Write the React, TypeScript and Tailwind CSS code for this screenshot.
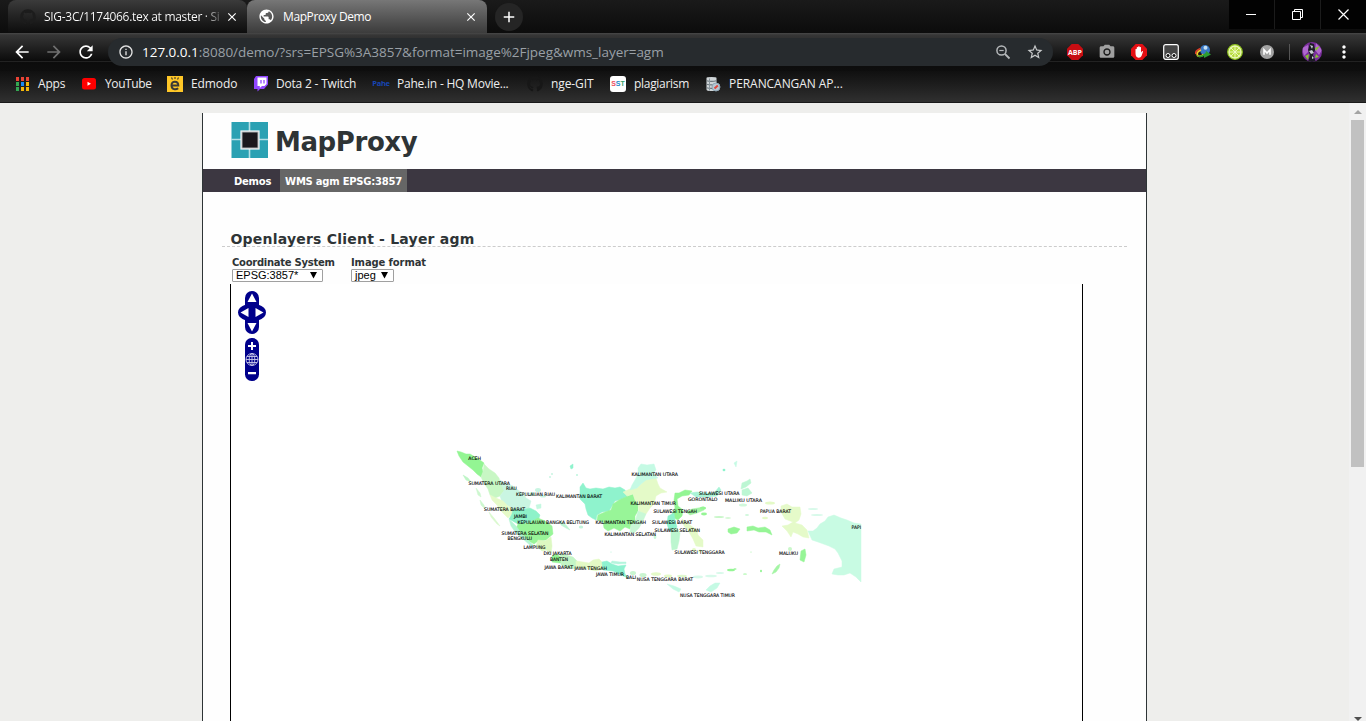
import React from "react";
import { FaGithub } from "react-icons/fa";
import { MdStarBorder, MdInfoOutline, MdArrowBack, MdArrowForward, MdRefresh, MdClose, MdAdd, MdPublic, MdCameraAlt, MdMoreVert } from "react-icons/md";

const ui = "font-['Open_Sans','Noto_Sans',sans-serif] whitespace-nowrap";
const verdana = "font-['DejaVu_Sans',sans-serif] whitespace-nowrap";

type Label = [string, number, number, number];

const labels: Label[] = [
  ["ACEH", 468.3, 481, 458.7],
  ["SUMATERA UTARA", 468.5, 510, 483],
  ["RIAU", 506, 516.7, 488.5],
  ["KEPULAUAN RIAU", 516, 555, 494.5],
  ["KALIMANTAN BARAT", 556, 602, 496],
  ["SUMATERA BARAT", 484, 525, 509.5],
  ["JAMBI", 514, 527, 516.5],
  ["KEPULAUAN BANGKA BELITUNG", 517.5, 589, 522.5],
  ["SUMATERA SELATAN", 501.5, 548.5, 533],
  ["BENGKULU", 507.5, 532, 538],
  ["LAMPUNG", 523.5, 545.5, 547.5],
  ["DKI JAKARTA", 543.5, 571.5, 553.5],
  ["BANTEN", 550, 568, 559.7],
  ["JAWA BARAT", 544.5, 573, 567.7],
  ["JAWA TENGAH", 574.5, 607, 568.5],
  ["JAWA TIMUR", 596, 624, 574.5],
  ["BALI", 626, 636, 577.5],
  ["NUSA TENGGARA BARAT", 636.8, 693, 579.3],
  ["NUSA TENGGARA TIMUR", 680, 735, 595.3],
  ["KALIMANTAN UTARA", 631.5, 678, 474.5],
  ["KALIMANTAN TIMUR", 630.5, 676, 503.3],
  ["SULAWESI TENGAH", 653.5, 697, 511.7],
  ["KALIMANTAN TENGAH", 595.5, 646, 521.8],
  ["SULAWESI BARAT", 652, 692, 521.8],
  ["SULAWESI SELATAN", 654.5, 700, 530.5],
  ["KALIMANTAN SELATAN", 604.5, 656, 534.7],
  ["SULAWESI TENGGARA", 674.5, 724.5, 552],
  ["GORONTALO", 688, 717.5, 499.3],
  ["SULAWESI UTARA", 699, 739.5, 493],
  ["MALUKU UTARA", 725, 762, 500],
  ["PAPUA BARAT", 760, 791, 511.7],
  ["MALUKU", 779, 798, 553.5],
  ["PAPI", 851.5, 861, 527.7],
];

const regions: [string, string][] = [
  ["#93f593", "457,451 461,452 466,454 470,454 475,457 480,460 484,463 482,468 483,472 481,477 477,474 473,470 468,466 463,462 459,456"],
  ["#c8f7c4", "484,464 489,469 495,473 499,478 500,482 504,485 504,491 500,496 495,498 490,495 488,489 484,483 481,477 483,472"],
  ["#c9f5e2", "500,480 506,484 513,486 518,490 524,494 526,498 531,501 529,508 521,510 513,509 507,505 502,502 500,496 504,491"],
  ["#e5fac8", "490,495 496,498 503,501 508,506 513,509 512,514 508,518 504,514 500,510 497,505 492,500"],
  ["#8ef2c9", "513,509 521,510 530,508 536,511 540,515 538,521 529,523 518,524 509,519 512,514"],
  ["#98f598", "518,524 529,523 538,518 545,521 552,526 553,534 546,540 538,541 534,544 527,540 521,535 516,529"],
  ["#b4f5d4", "509,519 516,526 522,534 528,540 534,546 531,546 523,539 516,533 511,526"],
  ["#ddf8c2", "538,540 545,541 551,537 552,546 551,553 546,550 542,551 536,546"],
  ["#93f593", "552,556 556,554 561,557 566,555 569,558 568,563 560,563 552,562"],
  ["#c3f5c6", "560,554 566,555 573,557 577,561 576,569 568,568 561,565"],
  ["#e3fac5", "576,561 583,562 589,563 593,560 599,559 603,563 603,569 596,571 583,568 576,568"],
  ["#8ef2d0", "602,562 607,561 612,564 618,566 626,565 624,569 625,574 628,578 621,575 613,571 603,570"],
  ["#b4f5dd", "612,561 620,562 626,562 626,563.500 618,564 611,563"],
  ["#8ff3cd", "580,487 583,483 586,488 590,489 596,488 603,489 609,487 615,488 620,487 625,490 628,496 622,499 615,501 612,506 609,511 602,512 597,515 596,520 592,518 588,515 586,509 585,504 580,499"],
  ["#98f598", "628,496 633,494 635,500 638,504 638,511 635,516 635,522 631,525 630,529 625,527 620,531 614,528 608,531 604,528 603,522 597,520 598,515 605,512 611,510 613,504 619,500"],
  ["#e4fac8", "623,492 630,489 637,488 641,484 645,480 651,478 656,478 658,484 660,488 667,492 661,493 656,496 654,504 650,508 646,514 641,515 639,511 638,504 635,500 633,494 627,496"],
  ["#c5fae4", "638,468 641,464 647,465 654,464 656,470 653,473 658,478 651,479 646,480 641,484 637,488 630,490 632,485 635,480 638,474"],
  ["#c8f8d6", "638,511 646,514 643,521 639,528 634,533 630,532 631,525 635,522"],
  ["#93f593", "675,493 679,493 685,490 692,491 689,495 682,496 677,499 678,506 683,510 682,516 678,520 674,518 672,514 675,508 674,500"],
  ["#a9f4d7", "690,493 697,492 706,493 714,493 719,487 721,490 717,496 706,497 696,497"],
  ["#8ff3cd", "668,516 674,513 675,520 677,527 673,533 669,530 667,524"],
  ["#bcf6cf", "671,530 677,528 680,533 679,541 677,549 672,550 671,542"],
  ["#a4f5a5", "686,512 692,509 698,508 704,507 704,510 697,513 690,515"],
  ["#e4fac8", "682,519 690,525 697,530 698,535 703,540 703,547 696,546 693,539 689,532 684,526"],
  ["#96f596", "728,529 734,527 740,529 737,533 731,534 728,532"],
  ["#96f596", "747,527 753,526 758,528 765,527 770,530 772,535 766,532 759,532 754,530 747,531"],
  ["#e5fac9", "781,506 787,504 792,507 800,507 801,514 799,520 795,523 802,525 807,530 809,538 803,537 798,534 793,532 791,537 787,531 782,526 788,525 793,522 785,519 781,512"],
  ["#c8fbe3", "808,531 813,531 817,528 820,524 825,521 828,517 834,515 841,518 847,520 854,523 861,524 861,582 856,577 850,573 844,575 838,575 832,574 834,569 842,567 842,561 838,553 835,549 829,546 818,542 812,540"],
  ["#96f596", "801,551 805,549 806,555 804,562 800,560"],
  ["#a4f5a5", "774,570 777,566 780,564 779,568 776,572 772,574"],
  ["#c5fae4", "706,590 710,586 715,583 720,583 717,588 711,592"],
  ["#c5fae4", "667,584 674,586 681,589 679,592 673,589"],
  ["#bdf5c5", "463,475 468,478 471,482 466,480"],
  ["#cdf7cf", "476,488 480,493 481,497 478,495"],
  ["#cdf7cf", "480,500 484,505 485,509 481,505"],
  ["#d9f8cd", "489,512 494,518 500,526 497,524 491,517"],
  ["#c4f8e0", "536,505 541,504 541,508 537,509"],
  ["#bcf6d3", "560,521 566,525 570,530 566,528 561,525"],
  ["#bcf6d3", "742,483 747,481 750,479 751,483 746,487 741,489"],
  ["#bcf6d3", "742,490 748,488 752,493 747,496 742,495"],
  ["#8ff3cd", "570,466 573,464 573,468 571,469"],
  ["#c5fae4", "734,463 737,461 736,467"],
];

const islets: [number, number, number, number, string][] = [
  [577, 475, 1, 1, "#bdf5dc"], [552, 474, 1, 1, "#c9f5e2"], [550, 477, 1, 1, "#c9f5e2"], [724, 470, 1.4, 1.2, "#8ff3cd"],
  [538, 490, 3, 2, "#c9f5e2"], [543, 496, 3, 1.5, "#c9f5e2"], [532, 494, 3, 2, "#c9f5e2"], [581, 527, 2.2, 1.6, "#c3f5dc"],
  [633, 573, 3, 2, "#c9f5d0"], [643, 575, 3.6, 2, "#c9f5d0"], [656, 574, 5, 1.8, "#e4fac8"], [668, 576, 4, 1.4, "#e4fac8"],
  [682, 576, 5, 1.3, "#dff9cf"], [698, 577, 5, 1.4, "#d8faea"], [711, 576, 6, 1.3, "#d8faea"], [720, 573, 4, 1, "#d8faea"],
  [731, 570, 4, 1.3, "#96f596"], [735, 569, 1.6, 0.8, "#96f596"], [745, 574, 2, 0.6, "#96f596"], [761, 571, 1, 1.3, "#96f596"],
  [703, 508, 3, 1.6, "#96f596"], [704, 514, 3, 1.4, "#96f596"], [719, 517, 5, 1, "#c9f7c9"], [728, 518, 3, 0.8, "#c9f7c9"],
  [743, 505, 4, 1.5, "#d1f8dc"], [747, 515, 2, 1, "#d1f8dc"], [770, 503, 5, 1.6, "#e4fac8"], [765, 518, 3, 1.3, "#e4fac8"],
  [813, 509, 5, 1, "#d8faea"], [817, 515, 6, 1, "#d8faea"], [790, 549, 2, 2, "#c9f7c9"], [751, 552, 1, 0.6, "#c9f7c9"],
  [694, 550, 2, 2, "#e4fac8"], [700, 551, 2, 1.6, "#e4fac8"], [611, 552, 0.8, 0.6, "#c9f5e2"], [655, 537, 1.4, 2, "#c8f8d6"],
];

function IndonesiaMap() {
  return (
    <svg className="absolute left-[219px] top-[156px]" width="420" height="165" viewBox="450 440 420 165">
      <g strokeLinejoin="round">
        {regions.map(([fill, pts], i) => (
          <polygon key={i} points={pts} fill={fill} stroke={fill} strokeWidth="0.5" />
        ))}
        {islets.map(([cx, cy, rx, ry, fill], i) => (
          <ellipse key={i} cx={cx} cy={cy} rx={rx} ry={ry} fill={fill} />
        ))}
      </g>
      <g fill="#000" stroke="#000" strokeWidth="0.1" fontFamily="DejaVu Sans, sans-serif" fontSize="4.8">
        {labels.map(([t, x1, x2, y]) => (
          <text key={t} x={x1} y={y + 1.7} textLength={x2 - x1} lengthAdjust="spacingAndGlyphs">{t}</text>
        ))}
      </g>
    </svg>
  );
}

function PanZoom() {
  return (
    <svg className="absolute left-[7px] top-[6px]" width="28" height="92" viewBox="0 0 28 92">
      <g fill="#00008b">
        <rect x="7" y="1" width="14" height="43" rx="7" />
        <path d="M8 14.500 Q0 17 0 22.500 Q0 28 8 30.500 H20 Q28 28 28 22.500 Q28 17 20 14.500Z" />
        <rect x="7" y="48" width="14" height="43" rx="6.500" />
      </g>
      <g fill="#fff">
        <path d="M14 3.500 L18.500 12 H9.500Z M14 41.500 L18.500 33 H9.500Z M2.500 22.500 L10.500 18 V27Z M25.500 22.500 L17.500 18 V27Z" />
        <path d="M10 55h3v-3h2v3h3v2h-3v3h-2v-3h-3z M10 82h8v2.200h-8z" />
      </g>
      <g fill="none" stroke="#c9c9ea" strokeWidth="0.9">
        <circle cx="14" cy="69.500" r="6" />
        <ellipse cx="14" cy="69.500" rx="2.800" ry="6" />
        <path d="M8 69.500H20M14 63.500V75.500M9 66.500H19M9 72.500H19" />
      </g>
    </svg>
  );
}

function AppsIcon() {
  const c = ["#ea4335", "#ea4335", "#ea4335", "#34a853", "#1a88f5", "#f5b70a", "#34a853", "#f5b70a", "#f5b70a"];
  return (
    <svg width="13" height="14" viewBox="0 0 13 14">
      {c.map((f, i) => <rect key={i} x={(i % 3) * 5} y={Math.floor(i / 3) * 5} width="3" height="4" fill={f} />)}
    </svg>
  );
}

function YouTubeIcon() {
  return <svg width="14" height="12" viewBox="0 0 14 12"><rect width="14" height="11.500" rx="2.500" fill="#f00" /><path d="M5.500 3.800 9 5.800 5.500 7.800Z" fill="#fff" /></svg>;
}

function TwitchIcon() {
  return (
    <svg width="15" height="16" viewBox="0 0 15 16">
      <path d="M3 0H15V8.500L11 13H7L4.500 15.500V13H1V3Z" fill="#9146ff" />
      <path d="M4.500 1.500H13.500V8L11.500 10H9L6.800 12V10H4.500Z" fill="#fff" />
      <path d="M8 4V7.500M11 4V7.500" stroke="#9146ff" strokeWidth="1.300" />
    </svg>
  );
}

function EdmodoIcon() {
  return (
    <svg width="16" height="16" viewBox="0 0 16 16">
      <rect width="16" height="16" fill="#ffc727" />
      <path d="M4.500 1.500 5.500 3.500M8 1v2M11.500 1.500 10.500 3.500" stroke="#4a4330" strokeWidth="1.200" />
      <path d="M4.500 9.500H11.300C11.300 4.500 4.500 4.500 4.500 9.300C4.500 13.800 9 14 11.200 12.300" fill="none" stroke="#3b3a36" strokeWidth="2" />
    </svg>
  );
}

function DatabaseIcon() {
  return (
    <svg width="16" height="16" viewBox="0 0 16 16">
      <path d="M1.500 2Q1.500 1 6.500 1T11.500 2V13.500Q11.500 15 6.500 15T1.500 13.500Z" fill="#cfd5d8" />
      <path d="M1.500 4.800Q6.500 6 11.500 4.800M1.500 8.300Q6.500 9.500 11.500 8.300M1.500 11.800Q6.500 13 11.500 11.800" fill="none" stroke="#6c777d" strokeWidth="1.100" />
      <path d="M4.500 2.500v12" stroke="#8a969d" />
      <circle cx="11" cy="11" r="4" fill="#b5c7d3" stroke="#8fa5b3" />
      <path d="M9.500 12.500 12.800 9.500" stroke="#e0453a" strokeWidth="2" />
    </svg>
  );
}

function ZoomOutIcon() {
  return (
    <svg className="ml-auto" width="16" height="16" viewBox="0 0 16 16" fill="none" stroke="#b5b8ba" strokeWidth="1.500">
      <circle cx="6.500" cy="6.500" r="4.600" />
      <path d="M10 10 14.500 14.500" strokeWidth="1.800" />
      <path d="M4.300 6.500H8.700" strokeWidth="1.200" />
    </svg>
  );
}

function Extensions() {
  return (
    <div className="flex h-7 items-center gap-4">
      <svg width="16" height="16" viewBox="0 0 16 16"><path d="M4.700 0h6.600L16 4.700v6.600L11.300 16H4.700L0 11.300V4.700Z" fill="#c70d12" /><text x="1" y="10.800" textLength="14" lengthAdjust="spacingAndGlyphs" fontSize="7.500" fontWeight="700" fontFamily="Open Sans, sans-serif" fill="#fff">ABP</text></svg>
      <MdCameraAlt className="size-4 scale-110 text-[#a0a0a0]" />
      <svg width="16" height="16" viewBox="0 0 16 16"><path d="M4.700 0h6.600L16 4.700v6.600L11.300 16H4.700L0 11.300V4.700Z" fill="#e40f14" /><path d="M4.500 9V5.200q.7-.8 1.300 0V3.300q.7-.8 1.400 0V2.600q.7-.8 1.400 0v.7q.7-.8 1.400 0V8.500l1-1.300q1-.4 1 .5L10.500 12q-1 2-3 1.700Q4.500 13.500 4.500 9Z" fill="#fff" /></svg>
      <svg width="16" height="16" viewBox="0 0 16 16" fill="none" stroke="#fff"><rect x=".7" y=".7" width="14.600" height="14.600" rx="2" fill="#454545" strokeWidth="1.200" /><circle cx="5" cy="11.500" r="2" fill="#111" /><circle cx="11" cy="11.500" r="2" fill="#111" /></svg>
      <svg width="16" height="16" viewBox="0 0 16 16"><circle cx="10" cy="6" r="5" fill="#3a78c4" /><circle cx="10.500" cy="3.800" r="2" fill="#c3dff3" /><path d="M5.500 4.500Q0 6.500 .8 10" fill="none" stroke="#e33b29" strokeWidth="1.600" /><path d="M6 6Q1 8 2.500 11.500Q5 13.500 8.500 10.500" fill="none" stroke="#f6c92c" strokeWidth="1.800" /><path d="M1.500 11Q4 15 9 12L9 14 16 10.500 11 7 10.500 9Q6 13 1.500 11Z" fill="#2d9d32" /></svg>
      <svg width="16" height="16" viewBox="0 0 16 16"><circle cx="8" cy="8" r="7.300" fill="#eaf6b4" stroke="#8fc31f" strokeWidth="1.200" /><circle cx="8" cy="8" r="5.300" fill="#b6db3c" /><path d="M8 2V14M2 8H14M3.800 3.800 12.200 12.200M12.200 3.800 3.800 12.200" stroke="#f2fbc9" strokeWidth=".9" /></svg>
      <svg width="16" height="16" viewBox="0 0 16 16"><circle cx="8" cy="8" r="7" fill="#a2a2a2" /><path d="M5 10.800V5.800L8 9 11 5.800V10.800" fill="none" stroke="#fff" strokeWidth="1.600" /></svg>
    </div>
  );
}

function Avatar() {
  return (
    <svg width="20" height="20" viewBox="0 0 20 20">
      <defs><clipPath id="av"><circle cx="10" cy="10" r="10" /></clipPath></defs>
      <g clipPath="url(#av)">
        <rect width="20" height="20" fill="#7a2f9c" />
        <path d="M0 6 6 3 7 9 2 14Z M14 1 20 8 17 13 13 8Z" fill="#b068cf" />
        <path d="M8 1 12 2 13 8 11 13 14 20 6 20 8 13 6 8Z" fill="#1c1c24" />
        <path d="M8 3 11 4 10 7Z M7 9 10 8 12 11 9 12Z M10 14 12 16 10 17Z" fill="#c8ccd4" />
        <path d="M13 6 18 4 14 9Z M3 14 7 12 6 18Z M14 12 17 15 13 16Z" fill="#86c532" />
      </g>
    </svg>
  );
}

function Bookmark({ icon, text, className, tracking }: { icon: React.ReactNode; text: string; className: string; tracking: string }) {
  return (
    <div className={`flex h-full shrink-0 items-center gap-2 ${className}`}>
      <span className="flex w-4 shrink-0 justify-center">{icon}</span>
      <span className={`${ui} ${tracking} text-[12px] leading-4 text-[#eeeeee]`}>{text}</span>
    </div>
  );
}

function TabStrip() {
  return (
    <div className="flex h-[33px] bg-gradient-to-b from-[#1a1a1a] to-[#0c0c0c]">
      <div className="ml-2 flex w-[239px] items-center rounded-t-lg bg-gradient-to-b from-[#3b3b3b] to-[#0d0d0d] pl-3">
        <FaGithub className="size-4 shrink-0 text-[#1c1c1c]" />
        <div className={`${ui} ml-2 w-[181px] bg-gradient-to-r from-white from-88% to-[#333333] bg-clip-text text-[12px] leading-5 tracking-[-0.3px] text-transparent`}>SIG-3C/1174066.tex at master · Si</div>
        <MdClose className="size-[14px] shrink-0 text-white" />
      </div>
      <div className="flex w-[240px] items-center rounded-t-lg bg-gradient-to-b from-[#777777] to-[#3c3c3c] pl-[11px]">
        <MdPublic className="size-[17px] shrink-0 text-white" />
        <div className={`${ui} ml-2 w-[181px] text-[12px] leading-5 tracking-[-0.4px] text-white`}>MapProxy Demo</div>
        <MdClose className="size-[14px] shrink-0 text-white" />
      </div>
      <div className="ml-2 mt-[3px] flex size-7 items-center justify-center rounded-full bg-[#252525]">
        <MdAdd className="size-[18px] text-white" />
      </div>
      <div className="ml-auto flex h-[29px] gap-px bg-[#1b1b1b]">
        <div className="flex w-[45px] items-center justify-center bg-[#020202]"><svg width="11" height="11"><path d="M0 5.500H10" stroke="#fff" /></svg></div>
        <div className="flex w-[45px] items-center justify-center bg-[#020202]"><svg width="11" height="11" fill="none" stroke="#fff"><path d="M.5 2.500H8.500V10.500H.5ZM2.500 2.500V.5H10.500V8.500H8.500" /></svg></div>
        <div className="flex w-[45px] items-center justify-center bg-[#020202]"><svg width="11" height="11" stroke="#fff" strokeWidth="1.200"><path d="M.5.500 10.500 10.500M10.500.500.5 10.500" /></svg></div>
      </div>
    </div>
  );
}

function Toolbar() {
  return (
    <div className="flex h-[38px] items-center bg-[linear-gradient(to_bottom,#484848_0px,#363636_2px,#0b0b0b_28px,#222222_28px,#222222_29px,#0c0c0c_29px,#0e0e0e_38px)] pl-[12px]">
      <MdArrowBack className="size-5 text-white" />
      <MdArrowForward className="ml-3 size-5 text-[#707070]" />
      <MdRefresh className="ml-3 size-5 text-white" />
      <div className="ml-3 flex h-7 w-[945px] items-center rounded-full bg-[#272b2e] pl-[10px]">
        <MdInfoOutline className="size-4 text-[#e4e4e4]" />
        <div className={`${ui} ml-2 text-[13.5px] tracking-[-0.02px] text-[#9aa0a6]`}><span className="text-white">127.0.0.1</span>:8080/demo/?srs=EPSG%3A3857&amp;format=image%2Fjpeg&amp;wms_layer=agm</div>
        <ZoomOutIcon />
        <MdStarBorder className="ml-[15px] mr-[9px] size-[18px] text-[#c8cacb]" />
      </div>
      <div className="ml-[14px]"><Extensions /></div>
      <div className="ml-[14px] h-4 w-px bg-[#555555]" />
      <div className="ml-[12px]"><Avatar /></div>
      <MdMoreVert className="ml-[12px] size-5 text-white" />
    </div>
  );
}

function BookmarksBar() {
  return (
    <div className="flex h-8 items-center border-b border-[#1a1a1a] bg-gradient-to-b from-[#101010] to-[#303030] pb-[5px]">
      <Bookmark className="ml-[14px] w-[67px]" tracking="tracking-[-0.2px]" icon={<AppsIcon />} text="Apps" />
      <Bookmark className="w-[86px]" tracking="tracking-[-0.4px]" icon={<YouTubeIcon />} text="YouTube" />
      <Bookmark className="w-[85px]" tracking="tracking-[-0.1px]" icon={<EdmodoIcon />} text="Edmodo" />
      <Bookmark className="w-[121px]" tracking="tracking-[-0.2px]" icon={<TwitchIcon />} text="Dota 2 - Twitch" />
      <Bookmark className="w-[154px]" tracking="tracking-[-0.22px]" icon={<span className="font-['Open_Sans',sans-serif] text-[7.5px] font-bold tracking-[-0.3px] text-[#1746b4]">Pahe</span>} text="Pahe.in - HQ Movie..." />
      <Bookmark className="w-[83px]" tracking="tracking-[-0.1px]" icon={<FaGithub className="size-4 text-[#171717]" />} text="nge-GIT" />
      <Bookmark className="w-[95px]" tracking="tracking-[-0.3px]" icon={<span className="flex size-4 items-center justify-center rounded-[3px] bg-white font-['Liberation_Sans',sans-serif] text-[7px] font-bold"><span className="text-[#ee4b5c]">S</span><span className="text-[#2489c7]">S</span><span className="text-[#36a26b]">T</span></span>} text="plagiarism" />
      <Bookmark className="" tracking="tracking-[-0.06px]" icon={<DatabaseIcon />} text="PERANCANGAN AP..." />
    </div>
  );
}

function SelectBox({ value, width }: { value: string; width: string }) {
  return (
    <div className={`${width} flex h-[13px] items-center justify-between rounded-[1px] border border-[#a0a0a0] bg-white pl-[3px] pr-[5px] font-['Liberation_Sans',sans-serif] text-[11px] font-normal leading-[11px] tracking-normal text-black`}>
      <span>{value}</span>
      <svg width="7" height="7" viewBox="0 0 7 7"><path d="M0 0H7L3.500 6.500Z" /></svg>
    </div>
  );
}

function Page() {
  return (
    <div className="ml-[202px] flex w-[945px] flex-col border-x border-[#2e3436] bg-[#fefefe]">
      <div className="flex h-14 items-center pl-7">
        <svg className="mb-[2px]" width="38" height="36" viewBox="0 0 38 36">
          <rect x=".5" width="36.500" height="36" fill="#2ba1b3" />
          <path d="M18.500 0V36M0 17.500H37" stroke="#b5e0e6" strokeWidth="1.600" />
          <rect x="10" y="9" width="18" height="18" fill="#a9adae" stroke="#f5f5f5" strokeWidth="1.200" />
          <rect x="11.500" y="10.500" width="15" height="15" fill="#1b181c" />
        </svg>
        <h1 className={`${verdana} ml-[6px] pt-[2px] text-[26px] font-bold leading-8 tracking-[-0.4px] text-[#2e3436]`}>MapProxy</h1>
      </div>
      <nav className={`${verdana} flex h-[23px] items-center bg-[#3c3741] pl-[31px] text-[10px] font-bold tracking-[-0.24px] text-white`}>
        <span className="w-[46px] pt-[2px]">Demos</span>
        <span className="flex h-full w-[127px] items-center justify-center bg-[#666666] pt-[2px]">WMS agm EPSG:3857</span>
      </nav>
      <h2 className={`${verdana} ml-[19px] mt-[38px] h-[17px] w-[905px] border-b border-dashed border-[#cccccc] pl-[8.500px] text-[14px] font-bold leading-[19px] tracking-[0.21px] text-[#2e3436]`}>Openlayers Client - Layer agm</h2>
      <div className={`${verdana} ml-[29px] mt-[10px] flex h-[27px] text-[10px] font-bold leading-3 text-[#2e3436]`}>
        <div className="w-[119px] tracking-[-0.27px]"><div>Coordinate System</div><SelectBox value="EPSG:3857*" width="w-[91px]" /></div>
        <div className="tracking-[-0.12px]"><div>Image format</div><SelectBox value="jpeg" width="w-[43px]" /></div>
      </div>
      <div className="relative ml-[27px] w-[853px] flex-1 border-x border-black bg-white">
        <PanZoom />
        <IndonesiaMap />
      </div>
    </div>
  );
}

export default function App() {
  return (
    <div className="flex h-[721px] w-[1366px] flex-col overflow-hidden bg-[#eeeeec]">
      <TabStrip />
      <Toolbar />
      <BookmarksBar />
      <div className="flex min-h-0 flex-1">
        <div className="flex flex-1 pt-[10px]"><Page /></div>
        <div className="flex w-[17px] flex-col items-center bg-[#f1f1f1]">
          <svg className="mt-[6px] shrink-0" width="8" height="5"><path d="M0 5 4 1 8 5Z" fill="#a3a3a3" /></svg>
          <div className="mt-[6px] h-[347px] w-[13px] shrink-0 bg-[#c1c1c1]" />
          <svg className="mt-auto shrink-0" width="8" height="4"><path d="M0 0H8L4 4Z" fill="#505050" /></svg>
        </div>
      </div>
    </div>
  );
}
